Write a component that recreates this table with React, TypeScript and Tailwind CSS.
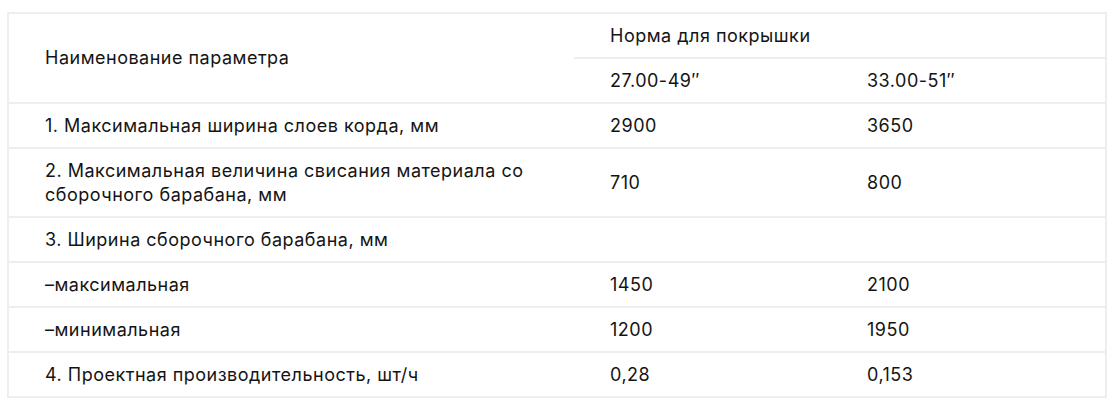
const rows: { name: string; a: string; b: string }[] = [
  { name: "1. Максимальная ширина слоев корда, мм", a: "2900", b: "3650" },
  {
    name: "2. Максимальная величина свисания материала со сборочного барабана, мм",
    a: "710",
    b: "800",
  },
  { name: "3. Ширина сборочного барабана, мм", a: "", b: "" },
  { name: "–максимальная", a: "1450", b: "2100" },
  { name: "–минимальная", a: "1200", b: "1950" },
  { name: "4. Проектная производительность, шт/ч", a: "0,28", b: "0,153" },
];

export default function App() {
  return (
    <div className="min-h-[412px] bg-white pl-[7px] pt-[12px] font-['Inter','Noto_Sans',sans-serif] text-[18px] leading-[24px] tracking-[0.5px] text-[#141414]">
      <div className="w-[1100px] border-2 border-[#eeeeee]">
        <table className="w-full table-fixed border-collapse text-left">
          <colgroup>
            <col className="w-[565px]" />
            <col className="w-[257px]" />
            <col />
          </colgroup>
          <thead>
            <tr>
              <th
                rowSpan={2}
                className="border-b-2 border-[#eeeeee] py-[9.5px] pl-9 pr-9 align-middle font-normal"
              >
                Наименование параметра
              </th>
              <th
                colSpan={2}
                className="border-b-2 border-[#eeeeee] py-[9.5px] pl-9 font-normal"
              >
                Норма для покрышки
              </th>
            </tr>
            <tr>
              <th className="border-b-2 border-[#eeeeee] py-[9.5px] pl-9 font-normal">
                27.00-49″
              </th>
              <th className="border-b-2 border-[#eeeeee] py-[9.5px] pl-9 font-normal">
                33.00-51″
              </th>
            </tr>
          </thead>
          <tbody>
            {rows.map((row, i) => (
              <tr
                key={row.name}
                className={i < rows.length - 1 ? "border-b-2 border-[#eeeeee]" : ""}
              >
                <td className="py-[9.5px] pl-9 pr-9">{row.name}</td>
                <td className="py-[9.5px] pl-9">{row.a}</td>
                <td className="py-[9.5px] pl-9">{row.b}</td>
              </tr>
            ))}
          </tbody>
        </table>
      </div>
    </div>
  );
}
